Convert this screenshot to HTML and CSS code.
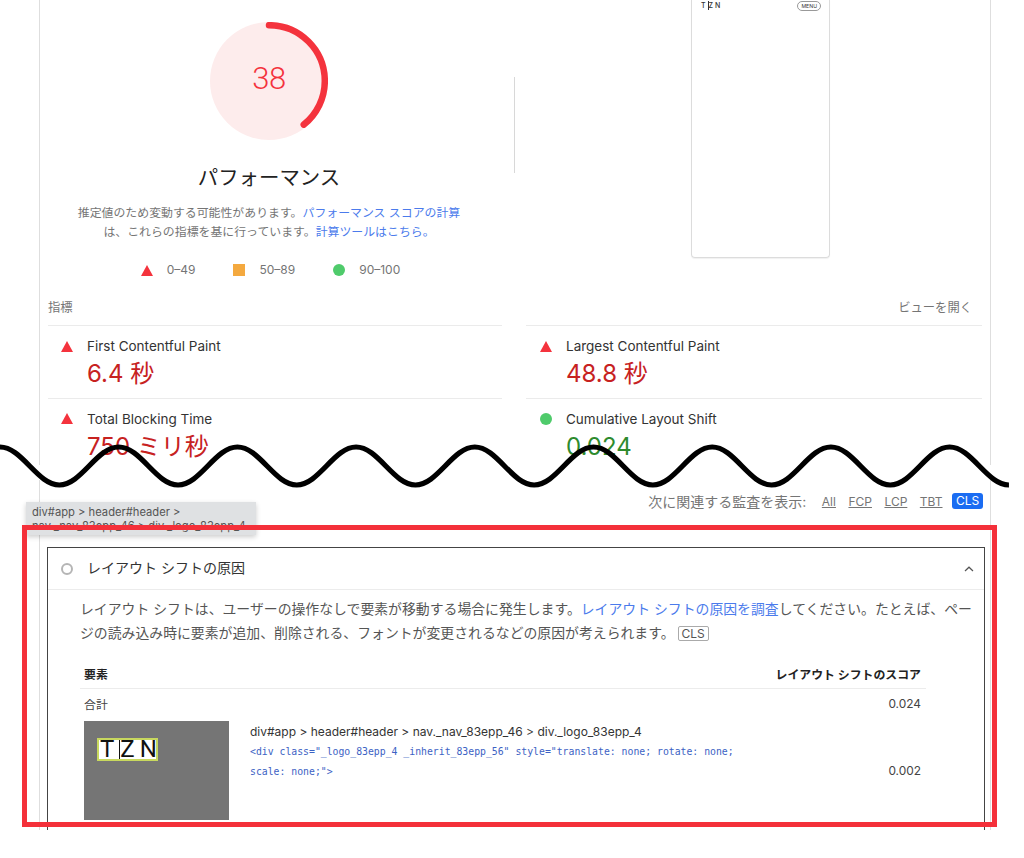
FILE: index.html
```html
<!DOCTYPE html>
<html lang="ja">
<head>
  <meta charset="UTF-8" />
  <title>PageSpeed Insights</title>
  <link rel="stylesheet" href="styles.css">
</head>
<body>

<div class="page">
  <div class="report report-top">
    <div class="summary">
      <div class="score-col">
        <svg class="gauge" viewBox="0 0 118 118" width="118" height="118">
          <circle cx="59" cy="59" r="59" fill="#fdecec"/>
          <circle class="gauge-arc" cx="59" cy="59" r="55.8" pathLength="100" stroke-dasharray="39.3 100" transform="rotate(-90 59 59)"/>
          <text class="gauge-num" x="59" y="67" text-anchor="middle">38</text>
        </svg>
        <h2 class="score-title">パフォーマンス</h2>
        <p class="score-note">推定値のため変動する可能性があります。<a href="#">パフォーマンス スコアの計算</a><br>は、これらの指標を基に行っています。<a href="#">計算ツールはこちら。</a></p>
        <div class="legend">
          <div class="legend-item"><span class="tri"></span>0–49</div>
          <div class="legend-item"><span class="square"></span>50–89</div>
          <div class="legend-item"><span class="dot"></span>90–100</div>
        </div>
      </div>
      <div class="divider"></div>
      <div class="phone">
        <div class="phone-bar">
          <span class="phone-logo">T<i>Z</i>N</span>
          <span class="phone-menu">MENU</span>
        </div>
      </div>
    </div>

    <div class="metrics">
      <div class="metrics-head">
        <span>指標</span>
        <span class="metrics-open">ビューを開く</span>
      </div>
      <div class="metrics-grid">
        <div class="metric">
          <div class="metric-label"><span class="tri"></span>First Contentful Paint</div>
          <div class="metric-value bad">6.4 秒</div>
        </div>
        <div class="metric">
          <div class="metric-label"><span class="tri"></span>Largest Contentful Paint</div>
          <div class="metric-value bad">48.8 秒</div>
        </div>
        <div class="metric">
          <div class="metric-label"><span class="tri"></span>Total Blocking Time</div>
          <div class="metric-value bad">750 ミリ秒</div>
        </div>
        <div class="metric">
          <div class="metric-label"><span class="dot"></span>Cumulative Layout Shift</div>
          <div class="metric-value good">0.024</div>
        </div>
      </div>
    </div>
  </div>

  <div class="report report-bottom">
    <div class="filter">
      <span class="filter-label">次に関連する監査を表示:</span>
      <a href="#">All</a>
      <a href="#">FCP</a>
      <a href="#">LCP</a>
      <a href="#">TBT</a>
      <span class="filter-on">CLS</span>
    </div>

    <div class="audit">
      <div class="audit-head">
        <span class="ring"></span>
        <span class="audit-title">レイアウト シフトの原因</span>
        <svg class="chevron" viewBox="0 0 10 6" width="10" height="6"><path d="M1 5 5 1.2 9 5" fill="none" stroke="#555" stroke-width="1.2"/></svg>
      </div>
      <div class="audit-body">
        <p class="audit-text">レイアウト シフトは、ユーザーの操作なしで要素が移動する場合に発生します。<a href="#">レイアウト シフトの原因を調査</a>してください。たとえば、ペー<br>ジの読み込み時に要素が追加、削除される、フォントが変更されるなどの原因が考えられます。<span class="tag">CLS</span></p>
        <table class="audit-table">
          <thead>
            <tr><th colspan="2">要素</th><th class="num">レイアウト シフトのスコア</th></tr>
          </thead>
          <tbody>
            <tr class="total"><td colspan="2">合計</td><td class="num">0.024</td></tr>
            <tr class="node-row">
              <td class="thumb-cell">
                <div class="thumb">
                  <div class="thumb-mark"><span>T</span><span class="bar-z">Z</span><span>N</span></div>
                </div>
              </td>
              <td class="node">
                <div class="node-path">div#app &gt; header#header &gt; nav._nav_83epp_46 &gt; div._logo_83epp_4</div>
                <code class="node-code">&lt;div class="_logo_83epp_4 _inherit_83epp_56" style="translate: none; rotate: none;<br>scale: none;"&gt;</code>
              </td>
              <td class="num">0.002</td>
            </tr>
          </tbody>
        </table>
      </div>
    </div>
  </div>

  <svg class="wave" viewBox="0 0 1024 60" width="1024" height="60">
    <path d="M-59.35 45 c22 0 37.4 -38 59.35 -38 s37.4 38 59.35 38 s37.4 -38 59.35 -38 s37.4 38 59.35 38 s37.4 -38 59.35 -38 s37.4 38 59.35 38 s37.4 -38 59.35 -38 s37.4 38 59.35 38 s37.4 -38 59.35 -38 s37.4 38 59.35 38 s37.4 -38 59.35 -38 s37.4 38 59.35 38 s37.4 -38 59.35 -38 s37.4 38 59.35 38 s37.4 -38 59.35 -38 s37.4 38 59.35 38 s37.4 -38 59.35 -38 s37.4 38 59.35 38" fill="none" stroke="#000" stroke-width="5.2"/>
  </svg>

  <div class="tip">div#app &gt; header#header &gt;<br>nav._nav_83epp_46 &gt; div._logo_83epp_4</div>
  <div class="callout"></div>
</div>

</body>
</html>
```

FILE: styles.css
```css
* {
  box-sizing: border-box;
}
body {
  margin: 0;
  background: #fff;
  color: #212121;
  font-family: Inter, "Noto Sans CJK JP", sans-serif;
  overflow: hidden;
}
a {
  color: #4b7bec;
  text-decoration: none;
}
.page {
  position: relative;
  width: 1024px;
  height: 858px;
  overflow: hidden;
}
.report {
  width: 952px;
  margin-left: 39px;
  border-left: 1px solid #dedede;
  border-right: 1px solid #dedede;
  overflow: hidden;
}
.report-top {
  height: 465px;
}
.report-bottom {
  height: 350px;
  margin-top: 15px;
}

/* score block */
.summary {
  display: flex;
  align-items: flex-start;
  height: 300px;
}
.score-col {
  width: 458px;
  padding-top: 22px;
  display: flex;
  flex-direction: column;
  align-items: center;
}
.gauge-arc {
  fill: none;
  stroke: #f4333d;
  stroke-width: 6.5;
  stroke-linecap: round;
}
.gauge-num {
  fill: #f4333d;
  font-family: Roboto, sans-serif;
  font-size: 31px;
  font-weight: 300;
  letter-spacing: -0.5px;
}
.score-title {
  margin: 24px 0 0;
  font-size: 20.4px;
  line-height: 28px;
  font-weight: 400;
  color: #222;
}
.score-note {
  margin: 11px 0 0;
  font-size: 11.9px;
  line-height: 19px;
  color: #757575;
  text-align: center;
  white-space: nowrap;
}
.legend {
  display: flex;
  gap: 38px;
  margin-top: 21px;
  margin-left: 3px;
}
.legend-item {
  display: flex;
  align-items: center;
  gap: 14px;
  font-size: 12px;
  line-height: 16px;
  color: #757575;
}
.tri {
  width: 0;
  height: 0;
  flex: none;
  border-left: 6px solid transparent;
  border-right: 6px solid transparent;
  border-bottom: 11px solid #f4333d;
}
.square {
  width: 12px;
  height: 12px;
  background: #f4a93f;
}
.dot {
  width: 12px;
  height: 12px;
  flex: none;
  border-radius: 50%;
  background: #4fcb6b;
}
.divider {
  width: 1px;
  height: 96px;
  margin: 77px 0 0 16px;
  background: #d8d8d8;
}
.phone {
  width: 139px;
  height: 258px;
  margin-left: 176px;
  border: 1px solid #dcdcdc;
  border-top: 0;
  border-radius: 0 0 4px 4px;
  box-shadow: 0 1px 1px rgba(0,0,0,0.06);
}
.phone-bar {
  display: flex;
  justify-content: space-between;
  align-items: center;
  height: 11px;
  padding: 0 8px 0 9px;
}
.phone-logo {
  font-size: 7px;
  font-weight: 500;
  letter-spacing: 2px;
  color: #333;
}
.phone-logo i {
  font-style: normal;
  border-left: 1px solid #333;
}
.phone-menu {
  font-size: 5.2px;
  line-height: 8px;
  padding: 0 3px;
  border: 1px solid #999;
  border-radius: 5px;
  color: #333;
}

/* metrics */
.metrics {
  padding: 0 8px;
}
.metrics-head {
  display: flex;
  justify-content: space-between;
  font-size: 12.3px;
  line-height: 16px;
  padding-right: 10px;
  padding-bottom: 9px;
  color: #757575;
}
.metrics-grid {
  display: grid;
  grid-template-columns: 454px 456px;
  column-gap: 24px;
}
.metric {
  height: 72.5px;
  padding: 11px 0 0 13px;
  border-top: 1px solid #ebebeb;
}
.metric:nth-child(even) {
  padding-left: 14px;
}
.metric-label {
  display: flex;
  align-items: center;
  gap: 14px;
  font-size: 13.5px;
  line-height: 18px;
  color: #333;
}
.metric-value {
  margin: 4px 0 0 26px;
  font-size: 24px;
  line-height: 30px;
}
.bad {
  color: #c7221f;
}
.good {
  color: #2e8b2e;
}

/* filter row */
.filter {
  display: flex;
  justify-content: flex-end;
  align-items: center;
  height: 16px;
  margin: 13px 7px 38px 0;
  gap: 12.5px;
  font-size: 12px;
  color: #757575;
}
.filter-label {
  font-size: 14px;
  margin-right: 3px;
}
.filter a {
  color: #757575;
  text-decoration: underline;
}
.filter-on {
  margin-left: -3px;
  width: 31px;
  line-height: 16px;
  text-align: center;
  border-radius: 3px;
  background: #1a6cf2;
  color: #fff;
}

/* audit card */
.audit {
  margin: 0 5px 0 7px;
  border: 1px solid #444;
  border-bottom: 0;
  height: 290px;
  overflow: hidden;
}
.audit-head {
  display: flex;
  align-items: center;
  height: 42px;
  padding: 0 10px 0 13px;
  border-bottom: 1px solid #ececec;
}
.ring {
  width: 12px;
  height: 12px;
  border: 2px solid #b5b5b5;
  border-radius: 50%;
}
.audit-title {
  flex: 1;
  margin: 0 0 3px 14px;
  font-size: 14px;
  color: #333;
}
.audit-body {
  padding: 7px 0 0 32px;
}
.audit-text {
  margin: 0;
  font-size: 13.87px;
  line-height: 24px;
  color: #555;
  white-space: nowrap;
}
.tag {
  display: inline-block;
  padding: 0 3px;
  border: 1px solid #aaa;
  border-radius: 2px;
  font-size: 12px;
  line-height: 13px;
  margin-left: 3px;
}
.audit-table {
  width: 846px;
  margin-top: 17px;
  border-collapse: collapse;
  font-size: 11.9px;
  color: #444;
}
.audit-table th {
  height: 26px;
  padding: 0 5px 3px 4px;
  font-weight: 700;
  text-align: left;
  color: #222;
  border-bottom: 1px solid #ececec;
}
.audit-table td {
  padding: 0 5px 0 4px;
}
.audit-table .num {
  text-align: right;
}
.total td {
  height: 33px;
  padding-bottom: 3px;
}
.thumb-cell {
  width: 149px;
  vertical-align: top;
}
.thumb {
  position: relative;
  width: 145px;
  height: 99px;
  background: #757575;
}
.thumb-mark {
  position: absolute;
  left: 13px;
  top: 17px;
  width: 61px;
  height: 23px;
  padding-left: 1px;
  display: flex;
  gap: 5px;
  background: #fff;
  border: 2px solid #c8d85e;
  font-family: Roboto, sans-serif;
  font-size: 24px;
  line-height: 19px;
  color: #111;
}
.bar-z {
  border-left: 1.5px solid #111;
}
.audit-table td.node {
  padding: 1px 0 0 16px;
  vertical-align: top;
}
.node-path {
  font-size: 12px;
  line-height: 20px;
  color: #333;
}
.node-code {
  display: block;
  font-family: "DejaVu Sans Mono", monospace;
  font-size: 9.8px;
  line-height: 19.5px;
  color: #3c62c4;
  white-space: nowrap;
}

/* things laid over the screenshot */
.wave {
  position: absolute;
  left: 0;
  top: 440px;
}
.tip {
  position: absolute;
  left: 26px;
  top: 502px;
  width: 230px;
  height: 33px;
  padding: 3px 6px;
  overflow: hidden;
  background: #dfe1e3;
  box-shadow: 0 2px 5px rgba(0,0,0,0.2);
  font-size: 11.2px;
  line-height: 14px;
  color: #555;
  white-space: nowrap;
}
.callout {
  position: absolute;
  left: 22px;
  top: 525px;
  width: 975px;
  height: 302px;
  border: 5px solid #f4303a;
}
```
